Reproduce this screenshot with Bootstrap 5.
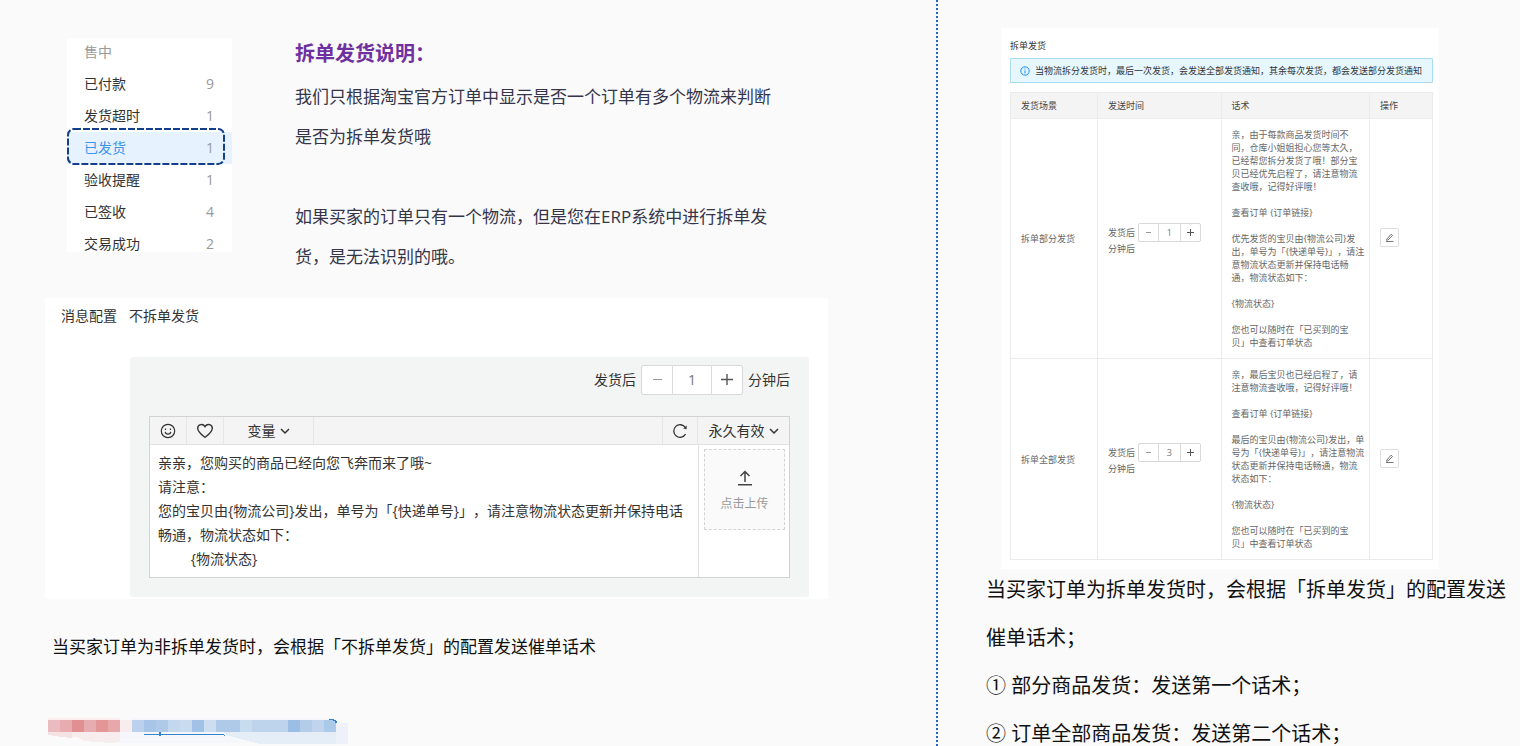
<!DOCTYPE html>
<html lang="zh-CN">
<head>
<meta charset="utf-8">
<meta name="viewport" content="width=device-width, initial-scale=1">
<title>拆单发货说明</title>
<link href="https://cdn.jsdelivr.net/npm/bootstrap@5.3.0/dist/css/bootstrap.min.css" rel="stylesheet">
<style>
  body { font-family: "Open Sans", "Noto Sans CJK SC", sans-serif; background: #fafafa; color: #333; font-size: 14px; line-height: 24px; text-spacing-trim: space-all; }
  button, input, textarea { font: inherit; color: inherit; border-radius: 0; }
  svg { display: block; fill: none; stroke: currentColor; }
  .doc-grid { display: grid; grid-template-columns: minmax(0, 938fr) minmax(0, 582fr); align-items: start; }
  .doc-left { border-right: 2px dotted #2a62c4; padding: 38px 108px 0 45px; min-height: 737px; }
  .doc-right { padding: 28px 8px 0 48px; }

  .status-list { width: 165px; max-height: 214px; overflow: hidden; margin-left: 22px; padding-top: 1px; }
  .status-head { line-height: 26px; padding: 0 17px 3px; color: #999; }
  .status-row { line-height: 32px; padding: 0 18px 0 17px; color: #333; text-decoration: none; position: relative; }
  .status-row span:last-of-type { color: #999; }
  .status-row.current { color: #3d94ea; background: #e6f3ff; }
  .status-row .ring { position: absolute; left: 0; top: -4px; color: #123e8a; }

  .intro { margin-left: 63px; font-size: 17px; line-height: 40px; color: #35354a; margin-top: -4px; }
  .intro h1 { font-size: 20px; line-height: 40px; color: #7030a0; font-weight: 700; margin-bottom: 3px; }
  .intro p { margin: 0 0 40px; }
  .intro p:last-child { margin: 0; }

  .config { margin-top: 21px; padding: 6px 19px 2px 16px; }
  .config-title { gap: 12px; margin-bottom: 29px; }
  .config-body { background: #f3f5f5; margin-left: 69px; padding: 8px 19px 19px; border-radius: 3px; }
  .delay-row { gap: 5px; }

  .stepper { border: 1px solid #d9d9d9; background: #fff; border-radius: 2px; }
  .stepper button { border: 0; background: none; padding: 0; width: 30px; height: 28px; color: #555; }
  .stepper button:first-child { color: #999; }
  .stepper input { border: 1px solid #d9d9d9; border-width: 0 1px; width: 40px; padding: 0; text-align: center; color: #777; background: #fff; }
  .stepper-tiny { margin-left: 3px; }
  .stepper-tiny button { width: 19px; height: 17px; }
  .stepper-tiny input { width: 23px; line-height: 17px; }

  .editor { border: 1px solid #d2d4d4; background: #fff; margin-top: 21px; }
  .toolbar { background: #f4f4f4; border-bottom: 1px solid #e2e2e2; height: 28px; }
  .toolbar button { border: 0; border-right: 1px solid #e6e6e6; background: none; padding: 0; width: 37px; }
  .toolbar .tool-var { width: 90px; }
  .toolbar .tool-reload { width: 36px; border-left: 1px solid #e6e6e6; }
  .toolbar .tool-valid { width: 91px; border-right: 0; }
  .editor textarea { border: 0; resize: none; padding: 6px 12px 6px 8px; outline: 0; background: #fff; overflow: hidden; }
  .upload-side { width: 91px; border-left: 1px solid #e2e2e2; padding: 4px 5px; }
  .upload { width: 81px; height: 81px; border: 1px dashed #d4d4d4; background: #fafafa; font-size: 12px; line-height: 18px; color: #999; gap: 9px; padding-top: 4px; }
  .upload svg { color: #444; }

  .caption { font-size: 17px; color: #111; margin: 36px -20px 0 7px; }
  .mosaic { margin: 59px 0 0 3px; }

  .split { margin: 0 73px 0 15px; padding: 11px 6px 9px 9px; font-size: 9px; line-height: 13px; color: #666; }
  .split h2 { font-size: 9px; line-height: 13px; font-weight: 400; color: #333; margin-bottom: 6px; }
  .notice { background: #e6f7ff; border: 1px solid #a9dcf0; border-radius: 1px; padding: 5px 9px; gap: 5px; color: #333; margin-bottom: 9px; white-space: nowrap; }
  .notice svg { color: #1890ff; }
  .split table { border-collapse: collapse; table-layout: fixed; width: 100%; margin: 0; }
  .split th, .split td { border: 1px solid #ebebeb; padding: 9px 0 9px 10px; vertical-align: middle; white-space: nowrap; }
  .split th { background: #f4f4f4; color: #444; font-weight: 400; padding: 6px 0 6px 10px; }
  .edit-btn { width: 19px; height: 19px; border: 1px solid #dedede; border-radius: 2px; background: #fff; padding: 0; }

  .rules { font-size: 20px; color: #111; }
  .rules p { line-height: 48px; margin: -3px 0 12px; }
  .rules ul { gap: 24px; }
</style>
</head>
<body>
<main class="doc-grid">
  <section class="doc-left">
    <div class="d-flex">
      <nav class="status-list bg-white flex-shrink-0" aria-label="售中">
        <div class="status-head">售中</div>
        <a class="status-row d-flex justify-content-between" href="#"><span>已付款</span><span>9</span></a>
        <a class="status-row d-flex justify-content-between" href="#"><span>发货超时</span><span>1</span></a>
        <a class="status-row current d-flex justify-content-between" href="#" aria-current="page"><span>已发货</span><span>1</span>
          <svg class="ring" width="159" height="38"><rect x="1" y="1" width="156" height="35" rx="6" stroke-width="2" stroke-dasharray="7 2"/></svg></a>
        <a class="status-row d-flex justify-content-between" href="#"><span>验收提醒</span><span>1</span></a>
        <a class="status-row d-flex justify-content-between" href="#"><span>已签收</span><span>4</span></a>
        <a class="status-row d-flex justify-content-between" href="#"><span>交易成功</span><span>2</span></a>
      </nav>
      <div class="intro text-nowrap">
        <h1>拆单发货说明：</h1>
        <p>我们只根据淘宝官方订单中显示是否一个订单有多个物流来判断<br>是否为拆单发货哦</p>
        <p>如果买家的订单只有一个物流，但是您在ERP系统中进行拆单发<br>货，是无法识别的哦。</p>
      </div>
    </div>

    <div class="config bg-white">
      <div class="config-title d-flex"><span>消息配置</span><span>不拆单发货</span></div>
      <div class="config-body">
        <div class="delay-row d-flex justify-content-end align-items-center">
          <label for="delay">发货后</label>
          <div class="stepper d-flex">
            <button type="button" aria-label="减少"><svg class="mx-auto" width="12" height="12"><path d="M2 5.5h9"/></svg></button>
            <input id="delay" type="text" value="1">
            <button type="button" aria-label="增加"><svg class="mx-auto" width="12" height="12" stroke-width="1.4"><path d="M0 5.500h12M6 0v11"/></svg></button>
          </div>
          <span>分钟后</span>
        </div>
        <div class="editor">
          <div class="toolbar d-flex">
            <button type="button" aria-label="表情"><svg class="mx-auto" width="16" height="16" stroke-width="1.2"><circle cx="8" cy="8" r="6.700"/><path d="M5.200 8.800c.5 3 5.100 3 5.600 0M5.500 5.500v1.400M10.500 5.500v1.400"/></svg></button>
            <button type="button" aria-label="收藏"><svg class="mx-auto" width="18" height="16" stroke-width="1.400"><path d="M9 14.300C6 12 1.700 9.300 1.700 5.300C1.700 1 7 .3 9 3.600C11 .3 16.300 1 16.300 5.300C16.300 9.300 12 12 9 14.300z"/></svg></button>
            <button type="button" class="tool-var d-flex align-items-center justify-content-center gap-1">变量<svg width="10" height="8" stroke-width="1.500"><path d="M1 2l4 4l4-4"/></svg></button>
            <button type="button" class="tool-reload ms-auto" aria-label="刷新"><svg class="mx-auto" width="16" height="16" stroke-width="1.300"><path d="M13.600 11A6.300 6.300 0 1 1 13.300 4.500"/><path d="M14.600 2.500v3.700l-3.300-.8z" fill="currentColor" stroke="none"/></svg></button>
            <button type="button" class="tool-valid d-flex align-items-center justify-content-center gap-1">永久有效<svg width="10" height="8" stroke-width="1.500"><path d="M1 2l4 4l4-4"/></svg></button>
          </div>
          <div class="d-flex">
            <textarea class="flex-grow-1" rows="5" aria-label="话术内容">亲亲，您购买的商品已经向您飞奔而来了哦~
请注意：
您的宝贝由{物流公司}发出，单号为「{快递单号}」，请注意物流状态更新并保持电话畅通，物流状态如下：
         {物流状态}</textarea>
            <div class="upload-side">
              <button type="button" class="upload d-flex flex-column align-items-center justify-content-center">
                <svg width="16" height="16" stroke-width="1.500"><path d="M8 12V2M3.500 6L8 1.500L12.500 6M1 14.800h14"/></svg>点击上传
              </button>
            </div>
          </div>
        </div>
      </div>
    </div>

    <p class="caption text-nowrap">当买家订单为非拆单发货时，会根据「不拆单发货」的配置发送催单话术</p>

    <svg class="mosaic" width="300" height="28" stroke="none" shape-rendering="crispEdges" aria-hidden="true">
      <g stroke="none">
        <path fill="#f7ecee" d="M0 13h72v11c0 0-8 2-35-1l-8-4l-15-1L0 16z"/>
        <path fill="#f5e3e4" d="M0 14h24v6l-10-1L0 17z"/>
        <path fill="#fbeff0" d="M0 0h72v3H0z"/>
        <path fill="#edf2f9" d="M84 0h204v14H84zM72 14h96l8 3l25 8H72z" opacity=".4"/>
        <path fill="#e5edf7" d="M176 14h112v12h-76l-20-5l-14-4z"/>
        <path fill="#eef1fa" d="M288 5h12v21h-12z"/>
        <path fill="#eabbc0" d="M0 2h12v12H0z"/><path fill="#e7acb0" d="M12 2h12v12H12z"/><path fill="#e09090" d="M24 2h12v12H24z"/><path fill="#e7acb0" d="M36 2h12v12H36z"/><path fill="#e29696" d="M48 2h12v12H48z"/><path fill="#e8a8aa" d="M60 2h12v12H60z"/><path fill="#f8ecee" d="M72 2h12v12H72z"/>
        <path fill="#bcd2ec" d="M84 2h12v12H84z"/><path fill="#a7c5e7" d="M96 2h12v12H96z"/><path fill="#afcae8" d="M108 2h12v12h-12z"/><path fill="#c3d7ee" d="M120 2h12v12h-12z"/><path fill="#c8dbef" d="M132 2h12v12h-12z"/><path fill="#a1c2e7" d="M144 2h12v12h-12z"/><path fill="#ccdef0" d="M156 2h12v12h-12z"/><path fill="#aecae8" d="M168 2h24v12h-24z"/><path fill="#c8dcef" d="M192 2h12v12h-12z"/><path fill="#bdd4ec" d="M204 2h36v12h-36z"/><path fill="#9bbfe4" d="M240 2h12v12h-12z"/><path fill="#b3cde9" d="M252 2h12v12h-12z"/><path fill="#c0d5ed" d="M264 2h12v12h-12z"/><path fill="#abc9e8" d="M276 2h12v12h-12z"/>
        <path fill="#3582d0" d="M96 16h80v1H96zM111 14h2v4h-2zM176 17h1v1h-1zM281 1h5v1h-5zM285 2h3v1h-3zM287 3h2v2h-2z"/>
      </g>
    </svg>
  </section>

  <section class="doc-right">
    <div class="split bg-white">
      <h2>拆单发货</h2>
      <div class="notice d-flex align-items-center" role="status">
        <svg width="10" height="10"><circle cx="5" cy="5" r="4.200"/><path d="M5 4.300v3.200M5 2.400v1"/></svg>
        <span>当物流拆分发货时，最后一次发货，会发送全部发货通知，其余每次发货，都会发送部分发货通知</span>
      </div>
      <table>
        <colgroup><col style="width:20.6%"><col style="width:29.3%"><col style="width:35.2%"><col style="width:14.9%"></colgroup>
        <thead><tr><th>发货场景</th><th>发送时间</th><th>话术</th><th>操作</th></tr></thead>
        <tbody>
          <tr>
            <td>拆单部分发货</td>
            <td><div class="d-flex align-items-center"><label for="part">发货后</label><div class="stepper stepper-tiny d-flex">
              <button type="button" aria-label="减少"><svg class="mx-auto" width="7" height="7"><path d="M1 3.500h5"/></svg></button>
              <input id="part" type="text" value="1">
              <button type="button" aria-label="增加"><svg class="mx-auto" width="7" height="7"><path d="M0 3.500h7M3.500 0v7"/></svg></button>
            </div></div>分钟后</td>
            <td>亲，由于每款商品发货时间不<br>同，仓库小姐姐担心您等太久，<br>已经帮您拆分发货了哦！部分宝<br>贝已经优先启程了，请注意物流<br>查收哦，记得好评哦！<br><br>查看订单 {订单链接}<br><br>优先发货的宝贝由{物流公司}发<br>出，单号为「{快递单号}」，请注<br>意物流状态更新并保持电话畅<br>通，物流状态如下：<br><br>{物流状态}<br><br>您也可以随时在「已买到的宝<br>贝」中查看订单状态</td>
            <td><button type="button" class="edit-btn" aria-label="编辑"><svg class="mx-auto" width="9" height="9"><path d="M1.500 6.500L6 1.200l1.500 1.300L3 7L1.400 7.200zM1 8.500h7.500" stroke-width=".9"/></svg></button></td>
          </tr>
          <tr>
            <td>拆单全部发货</td>
            <td><div class="d-flex align-items-center"><label for="all">发货后</label><div class="stepper stepper-tiny d-flex">
              <button type="button" aria-label="减少"><svg class="mx-auto" width="7" height="7"><path d="M1 3.500h5"/></svg></button>
              <input id="all" type="text" value="3">
              <button type="button" aria-label="增加"><svg class="mx-auto" width="7" height="7"><path d="M0 3.500h7M3.500 0v7"/></svg></button>
            </div></div>分钟后</td>
            <td>亲，最后宝贝也已经启程了，请<br>注意物流查收哦，记得好评哦！<br><br>查看订单 {订单链接}<br><br>最后的宝贝由{物流公司}发出，单<br>号为「{快递单号}」，请注意物流<br>状态更新并保持电话畅通，物流<br>状态如下：<br><br>{物流状态}<br><br>您也可以随时在「已买到的宝<br>贝」中查看订单状态</td>
            <td><button type="button" class="edit-btn" aria-label="编辑"><svg class="mx-auto" width="9" height="9"><path d="M1.500 6.500L6 1.200l1.500 1.300L3 7L1.400 7.200zM1 8.500h7.500" stroke-width=".9"/></svg></button></td>
          </tr>
        </tbody>
      </table>
    </div>
    <div class="rules">
      <p>当买家订单为拆单发货时，会根据「拆单发货」的配置发送催单话术；</p>
      <ul class="list-unstyled d-flex flex-column mb-0">
        <li>① 部分商品发货：发送第一个话术；</li>
        <li>② 订单全部商品发货：发送第二个话术；</li>
      </ul>
    </div>
  </section>
</main>
<script src="https://cdn.jsdelivr.net/npm/bootstrap@5.3.0/dist/js/bootstrap.bundle.min.js"></script>
</body>
</html>
